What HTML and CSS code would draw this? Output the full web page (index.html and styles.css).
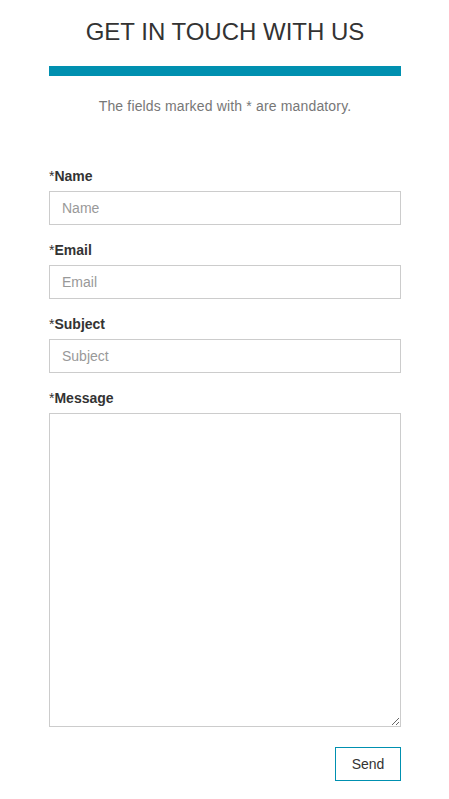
FILE: index.html
```html
<!DOCTYPE html>
<html>
<head>
<meta charset="utf-8">
<link rel="stylesheet" href="styles.css">
</head>
<body>
<div class="wrap">
  <h1 class="title">GET IN TOUCH WITH US</h1>
  <div class="bar"></div>
  <p class="note">The fields marked with * are mandatory.</p>
  <form class="form">
    <label class="label"><span class="star">*</span>Name</label>
    <input class="field" type="text" placeholder="Name">
    <label class="label"><span class="star">*</span>Email</label>
    <input class="field" type="text" placeholder="Email">
    <label class="label"><span class="star">*</span>Subject</label>
    <input class="field" type="text" placeholder="Subject">
    <label class="label"><span class="star">*</span>Message</label>
    <textarea class="area"></textarea>
    <div class="actions"><button class="send" type="button">Send</button></div>
  </form>
</div>
</body>
</html>
```
FILE: styles.css
```css
html, body { margin: 0; padding: 0; background: #fff; }
body { font-family: "Liberation Sans", Arial, sans-serif; color: #333; }
.wrap { padding: 0 48px 0 49px; }
.title { margin: 0; padding-top: 16px; font-size: 24px; line-height: 31px; font-weight: normal; text-align: center; color: #333; }
.bar { margin-top: 19px; height: 10px; background: #0090b0; }
.note { margin: 20px 0 0; font-size: 14px; letter-spacing: 0.16px; line-height: 20px; text-align: center; color: #777; }
.form { margin-top: 50px; display: flex; flex-direction: column; }
.label { display: block; font-size: 14px; line-height: 20px; font-weight: bold; color: #333; margin-bottom: 5px; }
.star { font-weight: normal; }
.field { box-sizing: border-box; width: 100%; height: 34px; margin: 0 0 15px; padding: 0 12px; border: 1px solid #ccc; font-family: inherit; font-size: 14px; color: #555; outline: none; }
.field::placeholder { color: #999; }
.area { box-sizing: border-box; width: 100%; height: 314px; margin: 0; padding: 6px 12px; border: 1px solid #ccc; font-family: inherit; font-size: 14px; resize: vertical; outline: none; display: block; }
.actions { display: flex; justify-content: flex-end; margin-top: 20px; }
.send { box-sizing: border-box; width: 66px; height: 34px; background: #fff; border: 1px solid #0090b0; color: #333; font-family: inherit; font-size: 14px; padding: 0; }
```
